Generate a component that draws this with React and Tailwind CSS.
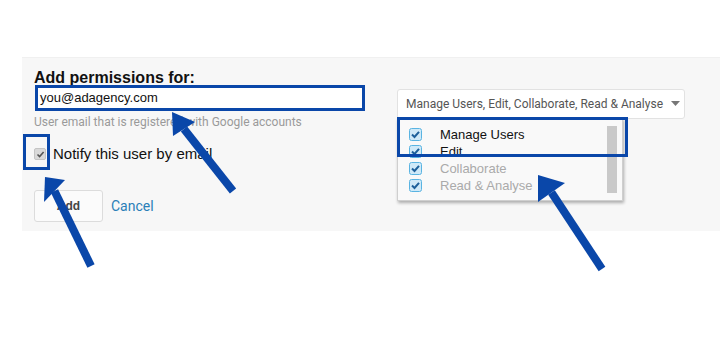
import React from "react";

const BLUE = "#0a47a9";

function MenuCheck() {
  return (
    <svg width="13" height="13" viewBox="0 0 13 13" className="shrink-0">
      <rect x="0.5" y="0.5" width="12" height="12" rx="2" fill="#cfe9f8" stroke="#5ab4e2" />
      <path d="M3 6.5 L5.5 9 L10 3.8" fill="none" stroke="#1d5f9a" strokeWidth="2" />
    </svg>
  );
}

function Arrow({ tip, c1, c2, tail }) {
  const mx = (c1[0] + c2[0]) / 2;
  const my = (c1[1] + c2[1]) / 2;
  return (
    <g>
      <line x1={mx} y1={my} x2={tail[0]} y2={tail[1]} stroke={BLUE} strokeWidth="8" />
      <polygon points={`${tip[0]},${tip[1]} ${c1[0]},${c1[1]} ${c2[0]},${c2[1]}`} fill={BLUE} />
    </g>
  );
}

export default function App() {
  return (
    <div className="relative w-[720px] h-[350px] overflow-hidden bg-white font-['Liberation_Sans',Arial,sans-serif]">
      <div className="ml-[22px] mt-[57px] h-[174px] bg-[#f7f7f7] border-t border-[#f0f0f0] flex">
        <div className="pl-[12px] w-[375px] flex flex-col">
          <div className="mt-[11px] text-[16px] leading-[17px] font-bold text-[#111]">Add permissions for:</div>
          <div className="mt-[-1px] ml-[1px] h-[26px] w-[330px] border-[3px] border-[#0a47a9] bg-white flex items-center pl-[2px] text-[13px] text-[#111]">
            you@adagency.com
          </div>
          <div className="mt-[4px] text-[12px] leading-[14px] text-[#9a9a9a] font-['Roboto',sans-serif]">
            User email that is registered with Google accounts
          </div>
          <div className="mt-[16px] flex items-center gap-[7px]">
            <div className="w-[12px] h-[12px] rounded-[2px] bg-[#d9d9d9] border border-[#c4c4c4] flex items-center justify-center">
              <svg width="9" height="9" viewBox="0 0 9 9">
                <path d="M1.5 4.5 L3.6 6.6 L7.6 2" fill="none" stroke="#555" strokeWidth="1.6" />
              </svg>
            </div>
            <span className="text-[15px] leading-[18px] text-[#111]">Notify this user by email</span>
          </div>
          <div className="mt-[27px] flex items-center gap-[8px]">
            <button className="w-[69px] h-[32px] rounded-[3px] border border-[#dcdcdc] bg-[#fbfbfb] text-[12px] font-bold text-[#444]">
              Add
            </button>
            <span className="text-[14px] text-[#2a7fb8] font-['Roboto',sans-serif]">Cancel</span>
          </div>
        </div>
        <div className="relative mt-[31px]">
          <div className="w-[288px] h-[30px] rounded-[3px] border border-[#e2e2e2] bg-white flex items-center justify-between pl-[8px] pr-[4px] font-['Roboto',sans-serif] text-[12px] text-[#555]">
            <span>Manage Users, Edit, Collaborate, Read &amp; Analyse</span>
            <svg width="9" height="6" viewBox="0 0 9 6"><path d="M0 0 H9 L4.5 5 Z" fill="#777" /></svg>
          </div>
          <div className="absolute left-0 top-[29px] w-[226px] h-[83px] bg-[#f9f9f9] border border-[#cfcfcf] shadow-[1px_2px_3px_rgba(0,0,0,0.3)] flex">
            <div className="flex-1 pl-[11px] pt-[9px] flex flex-col gap-[4px] text-[13px] leading-[13px]">
              <div className="flex items-center gap-[18px] text-[#111]"><MenuCheck />Manage Users</div>
              <div className="flex items-center gap-[18px] text-[#111]"><MenuCheck />Edit</div>
              <div className="flex items-center gap-[18px] text-[#aaa]"><MenuCheck />Collaborate</div>
              <div className="flex items-center gap-[18px] text-[#aaa]"><MenuCheck />Read &amp; Analyse</div>
            </div>
            <div className="w-[10px] mr-[5px] mt-[7px] mb-[7px] bg-[#c9c9c9]" />
          </div>
        </div>
      </div>

      <div className="absolute left-[23px] top-[134px] w-[27px] h-[36px] border-[3px] border-[#0a47a9]" />
      <div className="absolute left-[397px] top-[117px] w-[231px] h-[40px] border-[3px] border-[#0a47a9]" />

      <svg className="absolute left-0 top-0" width="720" height="350">
        <Arrow tip={[172, 112]} c1={[173, 136]} c2={[195, 122]} tail={[233, 191]} />
        <Arrow tip={[45, 177]} c1={[44, 202]} c2={[65, 180]} tail={[91, 266]} />
        <Arrow tip={[538, 175]} c1={[538, 202]} c2={[565, 183]} tail={[602, 269]} />
      </svg>
    </div>
  );
}
